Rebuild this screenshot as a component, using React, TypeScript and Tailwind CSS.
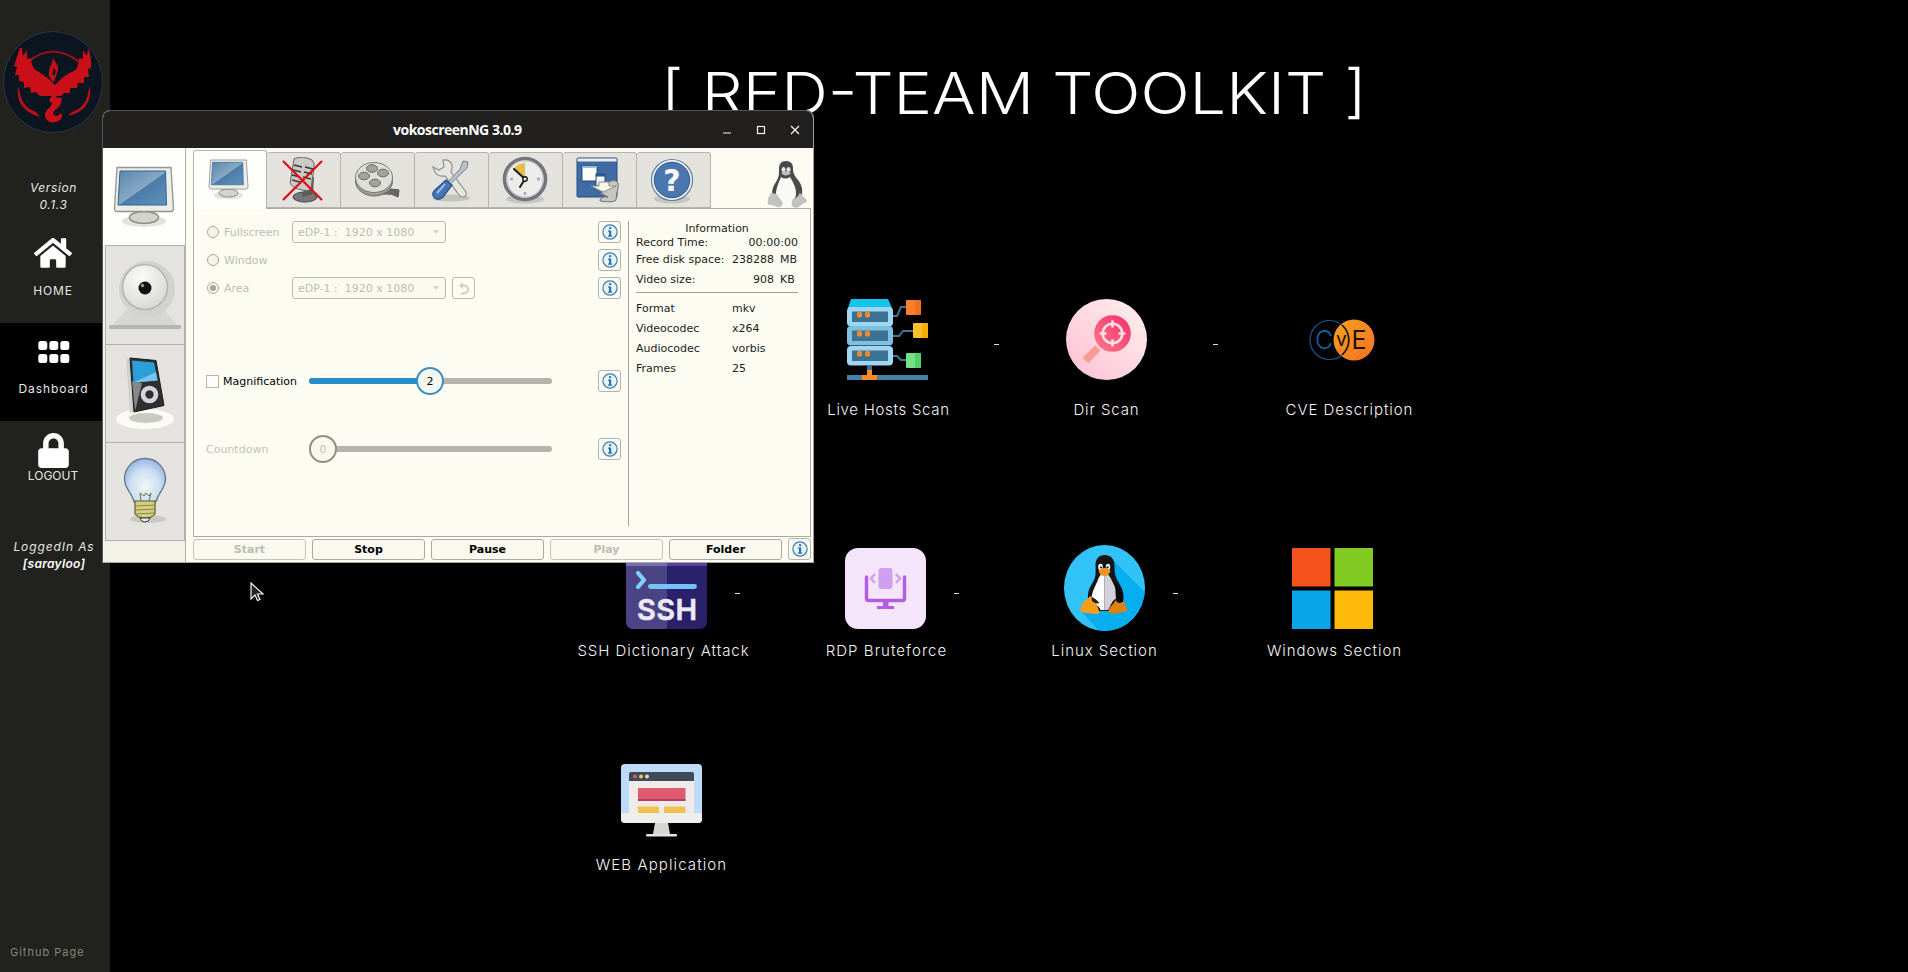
import type { ReactNode } from "react";
import { FaHome, FaLock } from "react-icons/fa";

/* ---------- launcher icons ---------- */

function ServerIcon() {
  return (
    <svg viewBox="0 0 81 81" className="h-[81px] w-[81px]">
      <path d="M4 0h37l4 9H1z" fill="#12c5ee" />
      {[8, 27, 47].map((y) => (
        <g key={y}>
          <rect x="0" y={y} width="46" height="19.5" rx="4" fill={y === 27 ? "#7fbfe2" : "#9fd6f3"} />
          <rect x="5" y={y + 4.5} width="36" height="10.5" fill="#3c7291" />
          <rect x="10" y={y + 5} width="5" height="5.5" rx="1.5" fill="#f58a2c" />
          <rect x="18" y={y + 5} width="5" height="5.5" rx="1.5" fill="#f58a2c" />
        </g>
      ))}
      <path d="M46 17h4l4-9h6M46 37h6l4-5h11M46 57h4l4 4h6" fill="none" stroke="#3f7594" strokeWidth="2" />
      <rect x="59" y="1" width="15" height="15" rx="1" fill="#fb7f2b" />
      <rect x="68" y="1" width="6" height="15" fill="#ef6f20" />
      <rect x="66" y="24" width="15" height="15" rx="1" fill="#fcc127" />
      <rect x="75" y="24" width="6" height="15" fill="#f7ab05" />
      <rect x="59" y="54" width="15" height="15" rx="1" fill="#73e287" />
      <rect x="68" y="54" width="6" height="15" fill="#52cf6c" />
      <rect x="20" y="66" width="5" height="6" fill="#3f7594" />
      <rect x="0" y="76" width="81" height="5" fill="#4682a2" />
      <path d="M20 71h5v5h5v5H15v-5h5z" fill="#f58a2c" />
    </svg>
  );
}

function DirScanIcon() {
  return (
    <svg viewBox="0 0 81 81" className="h-[81px] w-[81px]">
      <defs>
        <linearGradient id="dsBg" x1="0" y1="1" x2="1" y2="0">
          <stop offset="0" stopColor="#fcbfd3" />
          <stop offset="1" stopColor="#fff1ee" />
        </linearGradient>
        <linearGradient id="dsLens" x1="0" y1="1" x2="1" y2="0">
          <stop offset="0" stopColor="#fb7a85" />
          <stop offset="1" stopColor="#f72c6e" />
        </linearGradient>
      </defs>
      <circle cx="40.5" cy="40.5" r="40.5" fill="url(#dsBg)" />
      <path d="M29 46.500l5.500 5L22.500 64l-6-5z" fill="#fb9a90" />
      <circle cx="46.500" cy="34.500" r="18.300" fill="url(#dsLens)" />
      <circle cx="46.500" cy="34.500" r="9.800" fill="none" stroke="#ffdfe6" strokeWidth="2.600" />
      <path d="M46.500 21.500v7M46.500 40.500v7M33.500 34.500h7M52.500 34.500h7" stroke="#ffdfe6" strokeWidth="2.600" />
    </svg>
  );
}

function CveIcon() {
  return (
    <svg viewBox="0 0 66 42" className="h-[42px] w-[66px]">
      <defs>
        <linearGradient id="cveOrange" x1="0" y1="0" x2="1" y2="1">
          <stop offset="0" stopColor="#f9a21e" />
          <stop offset="1" stopColor="#f37021" />
        </linearGradient>
      </defs>
      <circle cx="45" cy="21" r="20.500" fill="url(#cveOrange)" />
      <circle cx="20.500" cy="21" r="19.500" fill="none" stroke="#15568a" strokeWidth="1.200" />
      <path d="M33.500 6.500a20 20 0 0 1 0 29" fill="none" stroke="#241608" strokeWidth="1.600" />
      <text x="6" y="30" fontSize="25" fill="#17609a" className="font-[Inter]" fontWeight="300">C</text>
      <text x="27" y="27" fontSize="19" fill="#1b1208" className="font-[Inter]" fontWeight="400">v</text>
      <text x="42.500" y="30" fontSize="25" fill="#1b1208" className="font-[Inter]" fontWeight="400">E</text>
    </svg>
  );
}

function SshIcon() {
  return (
    <svg viewBox="0 0 81 81" className="h-[81px] w-[81px]">
      <rect width="81" height="81" rx="7" fill="#29216a" />
      <path d="M7 0h34v81H7a7 7 0 0 1-7-7V7a7 7 0 0 1 7-7z" fill="#4b4484" />
      <path d="M0 18V7a7 7 0 0 1 7-7h34v18z" fill="#766cb8" />
      <path d="M41 0h33a7 7 0 0 1 7 7v11H41z" fill="#5b3fa6" />
      <path d="M12 25l6 7-6 7" fill="none" stroke="#7fd0fb" strokeWidth="4.200" strokeLinecap="round" strokeLinejoin="round" />
      <path d="M24.500 38.500h44" stroke="#74c3f8" strokeWidth="4.800" strokeLinecap="round" />
      <text x="11" y="71.500" fontSize="29" fontWeight="600" fill="#eceaf4" stroke="#eceaf4" strokeWidth="0.500" strokeLinejoin="round" textLength="60" lengthAdjust="spacing" className="font-[Inter]">SSH</text>
    </svg>
  );
}

function RdpIcon() {
  return (
    <svg viewBox="0 0 81 81" className="h-[81px] w-[81px]">
      <rect width="81" height="81" rx="13" fill="#f5e5fa" />
      <path d="M21.500 29v21.500a2 2 0 0 0 2 2h34a2 2 0 0 0 2-2V29" fill="none" stroke="#b45ce6" strokeWidth="3.400" strokeLinecap="round" />
      <path d="M38 53h5.500v5H49v3H32v-3h6z" fill="#b45ce6" />
      <rect x="33.500" y="20" width="14" height="21" rx="3" fill="#cfa0f0" />
      <path d="M30 26l-4 4.500 4 4.500M51 26l4 4.500-4 4.500" fill="none" stroke="#cfa0f0" strokeWidth="2.600" />
    </svg>
  );
}

function LinuxIcon() {
  return (
    <svg viewBox="0 0 81 86" className="-mt-[2px] h-[86px] w-[81px]">
      <defs>
        <clipPath id="lxClip">
          <ellipse cx="40.500" cy="43" rx="40.500" ry="43" />
        </clipPath>
      </defs>
      <g clipPath="url(#lxClip)">
        <rect width="81" height="86" fill="#31c3f8" />
        <path d="M49 15l32 32v39H35L18 67z" fill="#06aef0" />
      </g>
      <path d="M40.500 10c-5.500 0-9 4-9 10 0 7 1 11-2.500 17-4 6-5.500 10-5 17l5 12h22l8-9c2-8-1-14-4.500-20C51 31 50.500 28 50.500 20c0-6-4-10-10-10z" fill="#141517" />
      <path d="M40.500 27c-4 2-6 5-7 9-4 9-6 12-6 19 3 4 8 6 9 10h4z" fill="#fff" />
      <path d="M40.500 27c4 2 6 5 7.500 9 4 8 6 12 5 17-6 3-6 8-9 12h-3.500z" fill="#d3d0da" />
      <ellipse cx="36.500" cy="22" rx="2.300" ry="3.200" fill="#fff" />
      <ellipse cx="44" cy="22" rx="2.300" ry="3.200" fill="#e5e5e5" />
      <circle cx="37" cy="22.500" r="1.100" fill="#111" />
      <circle cx="43.500" cy="22.500" r="1.100" fill="#111" />
      <path d="M34.500 26c3-4 9-4 12 0-1 3-3 5-6 5s-5-2-6-5z" fill="#f59320" />
      <path d="M26 51l5 4 4.500 12c-1 3-4 2-8 1.500C22 67.500 17 68 16 65c1-3 2-3 2-6 1-3 6-4 8-8z" fill="#fb9c1c" />
      <path d="M54 52c1 5 5 6 7 5-1 4 2 5 2.500 8-2 2-6 2-9 3-4 1-8 1-10-1 0-5 4-6 9.500-15z" fill="#de810f" />
      <path d="M51 38c5 3 8 10 8 16 0 5-6 5-7 1z" fill="#08090b" />
      <path d="M28 52c2 1 5 3 7.500 6-3 1-6 0-8-3z" fill="#222" />
    </svg>
  );
}

function WindowsIcon() {
  return (
    <svg viewBox="0 0 81 81" className="h-[81px] w-[81px]">
      <rect width="38.500" height="38.500" fill="#f4511b" />
      <rect x="42.500" width="38.500" height="38.500" fill="#81cb22" />
      <rect y="42.500" width="38.500" height="38.500" fill="#09a6ea" />
      <rect x="42.500" y="42.500" width="38.500" height="38.500" fill="#fdb908" />
    </svg>
  );
}

function WebIcon() {
  return (
    <svg viewBox="0 0 81 73" className="h-[73px] w-[81px]">
      <rect width="81" height="59" rx="4" fill="#bddcfa" />
      <path d="M0 49h81v6a4 4 0 0 1-4 4H4a4 4 0 0 1-4-4z" fill="#eeeeea" />
      <path d="M8 11h65v38H8z" fill="#eeebea" />
      <path d="M10 8h61a2 2 0 0 1 2 2v7H8v-7a2 2 0 0 1 2-2z" fill="#3f4a56" />
      <circle cx="14" cy="12.500" r="2" fill="#d65b6c" />
      <circle cx="20" cy="12.500" r="2" fill="#efcb55" />
      <circle cx="26" cy="12.500" r="2" fill="#d8ddc9" />
      <rect x="17" y="24" width="47.500" height="13" fill="#e05b70" />
      <rect x="17" y="35" width="47.500" height="2" fill="#b83c64" />
      <path d="M17 42.500h21V49H17zM43 42.500h21.500V49H43z" fill="#f2c04f" />
      <path d="M34 59h13l2 11H32z" fill="#d6d6d2" />
      <rect x="25" y="70" width="31" height="2.600" rx="1" fill="#e4e4e0" />
    </svg>
  );
}

/* ---------- recorder icons ---------- */

function MonitorIcon({ className }: { className: string }) {
  return (
    <svg viewBox="0 0 62 62" className={className}>
      <defs>
        <linearGradient id="scr" x1="0" y1="0" x2="1" y2="1">
          <stop offset="0" stopColor="#5c86ac" />
          <stop offset="0.5" stopColor="#86a8c4" />
          <stop offset="0.52" stopColor="#4b7ca8" />
          <stop offset="1" stopColor="#5e93bb" />
        </linearGradient>
      </defs>
      <ellipse cx="31" cy="55" rx="22" ry="6" fill="#d9d9d0" opacity="0.7" />
      <ellipse cx="31" cy="51.500" rx="14.500" ry="6" fill="#d3d3ce" stroke="#8c8c86" strokeWidth="1.500" />
      <path d="M4 1.500h54l2.500 41q0 3-3 3h-53q-3 0-3-3z" fill="#ecece8" stroke="#94948e" strokeWidth="1.300" />
      <path d="M7 5h45.500l1 34H5z" fill="url(#scr)" stroke="#2f6591" strokeWidth="1" />
    </svg>
  );
}

function WebcamIcon() {
  return (
    <svg viewBox="0 0 74 74" className="h-[74px] w-[74px]">
      <defs>
        <radialGradient id="camBall" cx="0.400" cy="0.300" r="0.700">
          <stop offset="0" stopColor="#fbfbf8" />
          <stop offset="1" stopColor="#d9d9d5" />
        </radialGradient>
      </defs>
      <path d="M18 52h38l14 16H4z" fill="#d6d6d2" />
      <rect x="1" y="67" width="72" height="4" rx="1" fill="#b4b4b2" />
      <circle cx="39" cy="31" r="28" fill="#d2d2ce" />
      <circle cx="37" cy="29" r="22.500" fill="url(#camBall)" stroke="#b5b5b2" strokeWidth="1.600" />
      <circle cx="37" cy="30" r="6.500" fill="#111" />
      <circle cx="34.500" cy="27.500" r="1.700" fill="#999" />
    </svg>
  );
}

function PlayerIcon() {
  return (
    <svg viewBox="0 0 60 74" className="h-[74px] w-[60px]">
      <ellipse cx="30" cy="63" rx="29" ry="10" fill="#fcfcf4" />
      <ellipse cx="31" cy="62" rx="17" ry="5" fill="#cacac4" />
      <path d="M11 3l4-1 4 54-4 1z" fill="#d0d0cc" />
      <path d="M15 2l26 2.500 8 45L19 56z" fill="#2f2f31" stroke="#1b1b1b" strokeWidth="1" />
      <path d="M17 25l10 2-7 28z" fill="#87878a" />
      <path d="M17 4.500l22 2 3.500 18-24 2z" fill="#2b9fd8" />
      <path d="M41 16l1.500 8.500-24 2z" fill="#73c5ea" />
      <circle cx="34.500" cy="38.500" r="6.500" fill="none" stroke="#d6d6d8" strokeWidth="4.600" />
    </svg>
  );
}

function BulbIcon() {
  return (
    <svg viewBox="0 0 44 68" className="h-[68px] w-[44px]">
      <defs>
        <radialGradient id="bulb" cx="0.5" cy="0.600" r="0.600">
          <stop offset="0" stopColor="#f2f6f6" />
          <stop offset="0.600" stopColor="#cbdff2" />
          <stop offset="1" stopColor="#95b4e6" />
        </radialGradient>
      </defs>
      <ellipse cx="25" cy="62" rx="18" ry="4" fill="#c9c9c2" />
      <path d="M22 1.500C10 1.500 1.500 11 1.500 22c0 9 7 14 8.500 20 1 5 6 5 12 5s11 0 12-5c1.500-6 8.500-11 8.500-20C42.500 11 34 1.500 22 1.500z" fill="url(#bulb)" stroke="#6c7480" strokeWidth="1.300" />
      <path d="M18 44l-1-8 4 3 2-3 3 3 2-3-2 8" fill="none" stroke="#6b7248" strokeWidth="1" />
      <path d="M12 44h20v13q-3 4-10 4t-10-4z" fill="#d4cf80" stroke="#5d5b2c" strokeWidth="1.200" />
      <path d="M12 49l20-1M12 53l20-1M12 57l20-1" stroke="#8a8548" strokeWidth="1" />
      <path d="M17 61h10q-1 4-5 4t-5-4z" fill="#eee" stroke="#333" strokeWidth="1" />
    </svg>
  );
}

function MicIcon() {
  return (
    <svg viewBox="0 0 46 46" className="h-[46px] w-[46px]">
      <ellipse cx="25" cy="40" rx="12" ry="5" fill="#777" stroke="#444" />
      <path d="M27 20h7l-1 17-11 3z" fill="#5d5b58" />
      <path d="M14 2q8-4 18 1 3 2 2 8l-3 20q-1 4-9 2-10-2-12-7z" fill="#c9c9c5" stroke="#666" strokeWidth="1" />
      <path d="M14 8l8 2M25 10l8 2M13 13l8 2M24 15l8 2M12 18l8 2M23 20l8 2M12 23l8 2" stroke="#3a3a38" strokeWidth="1.800" />
      <path d="M3 4l39 39M42 4L3 43" stroke="#dd0d12" strokeWidth="2.200" />
    </svg>
  );
}

function ReelIcon() {
  return (
    <svg viewBox="0 0 46 38" className="h-[38px] w-[46px]">
      <path d="M20 34q12 0 17-6l8 1-1 7q-6-4-14-3z" fill="#686864" stroke="#555" />
      <ellipse cx="20" cy="20" rx="18.500" ry="15" fill="#9b9b96" stroke="#6d6d69" />
      <ellipse cx="20" cy="16.500" rx="18.500" ry="15" fill="#dededa" stroke="#7c7c77" />
      {[[18, 7.500], [29, 12], [10, 15], [21, 22]].map(([x, y]) => (
        <ellipse key={x} cx={x} cy={y} rx="5.500" ry="3.800" fill="#a3a39e" stroke="#6a6a66" />
      ))}
    </svg>
  );
}

function ToolsIcon() {
  return (
    <svg viewBox="0 0 40 44" className="h-[44px] w-[40px]">
      <ellipse cx="20" cy="40" rx="19" ry="3.500" fill="#c3c3be" />
      <path d="M12 2q7-1 9 5 1 3-1 7l15 20q1 5-3 5-3 0-4-2L14 18q-7 1-10-4l-2-5 6 3 5-3z" fill="#e5e5e1" stroke="#8f8f8a" strokeWidth="1.200" />
      <path d="M32 3l5 1-1 6-4 4-14 13-2-2L29 11z" fill="#b9c1ce" stroke="#7d8490" strokeWidth="1" />
      <path d="M15 22l6 5-9 12q-4 4-8 1-4-3-1-7z" fill="#4675b4" stroke="#234c88" strokeWidth="1.200" />
      <path d="M14 26L6 35" stroke="#9dbbe2" strokeWidth="2" />
    </svg>
  );
}

function ClockIcon() {
  return (
    <svg viewBox="0 0 46 48" className="h-[48px] w-[46px]">
      <ellipse cx="23" cy="43" rx="19" ry="4.500" fill="#c6c6c0" />
      <circle cx="23" cy="23" r="20.500" fill="#ececea" stroke="#74747e" strokeWidth="3.600" />
      <circle cx="23" cy="23" r="18.200" fill="none" stroke="#b9b9bf" strokeWidth="1" />
      <path d="M23 23V7q-7 0-12 6z" fill="#e7bd4a" />
      <path d="M23 23L12 13M23 23l-5 8" stroke="#1a1a1a" strokeWidth="2" strokeLinecap="round" />
      <circle cx="23" cy="23" r="2.200" fill="#fff" stroke="#111" strokeWidth="1.400" />
      <path d="M8 23h3M35 23h3M23 36v3" stroke="#a9a9a9" strokeWidth="2.500" />
    </svg>
  );
}

function WindowsCopyIcon() {
  return (
    <svg viewBox="0 0 44 46" className="mr-[2px] h-[46px] w-[44px]">
      <rect x="1" y="1" width="40" height="39" rx="1" fill="#3e6ba3" stroke="#274c7d" />
      <rect x="1.500" y="1.500" width="39" height="3" fill="#eceded" />
      <rect x="6" y="9" width="15" height="15" fill="#fcfcf8" stroke="#274c7d" />
      <rect x="6" y="9" width="15" height="2" fill="#9db7d8" />
      <rect x="20" y="17" width="9" height="12" fill="#f2f4f8" stroke="#274c7d" />
      <rect x="20" y="17" width="9" height="2.500" fill="#2e558c" />
      <path d="M24 36q7-1 7-10 8-5 11 0 1 5-1 9l-1 8q-2 3-16 1 0-5 8-4z" fill="#c5c5c1" stroke="#72726e" />
      <path d="M15 29h8v-4h10v4h7L27 35z" fill="#f5f5e8" stroke="#8c8c88" />
    </svg>
  );
}

function HelpIcon() {
  return (
    <svg viewBox="0 0 46 48" className="mr-[2px] h-[48px] w-[46px]">
      <ellipse cx="23" cy="43" rx="18" ry="4.500" fill="#c6c6c0" />
      <circle cx="23" cy="24" r="20.500" fill="#f8f8f6" stroke="#5f7da6" strokeWidth="1.200" />
      <circle cx="23" cy="24" r="17.800" fill="#4a78ae" stroke="#2a5890" strokeWidth="1" />
      <text x="23" y="35" textAnchor="middle" fontSize="30" fontWeight="700" fill="#fafaf6" className="font-[DejaVu_Sans]">?</text>
    </svg>
  );
}

function TuxIcon() {
  return (
    <svg viewBox="0 0 40 48" className="h-[48px] w-[40px]">
      <path d="M19 1c-5 0-7 3-7 8 0 6 0 8-3 13-3 4-4 8-4 12l3 8h22l5-8c1-6-1-10-4-14-4-5-5-7-5-12 0-5-3-7-7-7z" fill="#4a4a4a" />
      <path d="M14 17c3 2 6 2 9 0 3 5 6 10 6 16s-4 12-10 12-10-5-10-11c0-6 3-12 5-17z" fill="#fafaf5" />
      <ellipse cx="16.500" cy="9.500" rx="2" ry="2.600" fill="#e8e8e4" />
      <ellipse cx="21.500" cy="9.500" rx="2" ry="2.600" fill="#e8e8e4" />
      <path d="M14 13q5-4 10 0-5 5-10 0z" fill="#bdbdb9" />
      <path d="M5 33l4 1 6 8q1 4-3 5-5-2-11-3 0-4 1-7z" fill="#c2c2be" stroke="#aaa" strokeWidth="0.500" />
      <path d="M26 39q4 0 7-6l3 4q3 2 4 4-5 3-9 6-6 1-6-3z" fill="#c2c2be" stroke="#aaa" strokeWidth="0.500" />
    </svg>
  );
}

function PhoenixLogo() {
  return (
    <svg viewBox="0 0 100 102" className="h-[102px] w-[100px]">
      <ellipse cx="50" cy="51" rx="49.500" ry="50.500" fill="#0b1520" stroke="#2e3446" strokeWidth="1" />
      <path d="M25 31q25-21 51 0" fill="none" stroke="#9c1018" strokeWidth="2" />
      <path d="M15 55q-3 24 22 31l-4-5Q19 76 17 62z" fill="#b81018" />
      <path d="M87 55q3 24-22 30l4-4q14-5 16-19z" fill="#b81018" />
      <path d="M50 26c1 5 6 7 5 13-1 4-3 8-4 12-3-2-6-5-5-11 0-4 4-8 4-14z" fill="#c41018" />
      <path d="M51 37q3 3 0 8-3-3 0-8z" fill="#0b1520" />
      <path d="M17 17l1 8 4-6v9l4-1q0 9 6 13 8 4 13 9l5 5 5-5q6-6 14-9 5-4 5-13l4 1v-9l4 6 1-8q4 10 3 20l-3 1 1 8-5 0 0 6-6 0-1 5-7 0 0 5-6 0-3 3H35l-4-4-5 1-1-6-6 1 0-6-5-1 0-6-4 0 2-8-3-1Q12 25 15 17z" transform="translate(2 0)" fill="#c90f18" />
      <path d="M50 63l5 4h4q-1 9-7 12-4 4 1 6 5-1 4-4 4 4 0 8-8 5-13 0-4-5 0-10 5-4 5-7-2 0-3-3z" fill="#c90f18" />
    </svg>
  );
}

/* ---------- recorder window ---------- */

function InfoButton() {
  return (
    <button className="flex h-[22px] w-[23px] shrink-0 items-center justify-center rounded-[3px] border border-[#b4b4ac] bg-[#fbfbf2]">
      <svg viewBox="0 0 16 16" className="h-4 w-4">
        <circle cx="8" cy="8" r="7.100" fill="#e9f4f8" stroke="#3b7fb2" strokeWidth="1.200" />
        <rect x="7" y="3.200" width="2.200" height="2" fill="#2b72aa" />
        <path d="M6 6.500h3.200v5h1v1.200H6v-1.200h1V7.700H6z" fill="#2b72aa" />
      </svg>
    </button>
  );
}

function Radio({ label, checked }: { label: string; checked?: boolean }) {
  return (
    <>
      <span className="flex h-3 w-3 items-center justify-center rounded-full border border-[#a8a89e] bg-[#f3f3e8]">
        {checked && <span className="h-1.5 w-1.5 rounded-full bg-[#a4a49c]" />}
      </span>
      <span className="w-[68px] pl-[5px] text-[#bcbcb2]">{label}</span>
    </>
  );
}

function Combo() {
  return (
    <span className="ml-[5px] flex h-[22px] w-[154px] items-center justify-between rounded-[3px] border border-[#b9b9b0] bg-[#fafaf0] pr-[6px] pl-[5px] whitespace-pre text-[#bebeb4]">
      eDP-1 :&nbsp; 1920 x 1080
      <svg viewBox="0 0 6 4" className="h-[4px] w-[6px]">
        <path d="M0 0h6L3 4z" fill="#d2d2c8" />
      </svg>
    </span>
  );
}

function Tab({ children }: { children: ReactNode }) {
  return (
    <div className="flex h-[56px] w-[74px] items-center justify-center rounded-t-[3px] border border-l-0 border-[#b4b4b2] bg-[#e3e2dd] pr-[2px]">
      {children}
    </div>
  );
}

function SideTab({ children }: { children: ReactNode }) {
  return (
    <div className="ml-[2px] flex h-[98.5px] items-center justify-center border border-b-0 border-[#b0b0ae] bg-[#e5e3df] last:border-b">
      {children}
    </div>
  );
}

function ActionButton({ label, disabled }: { label: string; disabled?: boolean }) {
  return (
    <button
      disabled={disabled}
      className="h-[21px] w-[113px] rounded-[3px] border border-[#aaaaa2] bg-[#f9f9ef] text-[11px] font-bold text-black disabled:border-[#c4c4bc] disabled:text-[#bdbdb4]"
    >
      {label}
    </button>
  );
}

function InfoRow({ label, value, unit }: { label: string; value: string; unit: string }) {
  return (
    <div className="flex h-5 items-center">
      <span className="w-[76px] whitespace-nowrap">{label}</span>
      <span className="w-[62px] text-right">{value}</span>
      <span className="pl-[6px]">{unit}</span>
    </div>
  );
}

function RecorderWindow() {
  const formats = [
    ["Format", "mkv"],
    ["Videocodec", "x264"],
    ["Audiocodec", "vorbis"],
    ["Frames", "25"],
  ];
  return (
    <section className="absolute top-[110px] left-[102px] flex h-[453px] w-[712px] flex-col overflow-hidden rounded-t-[8px] border border-[#54545a] border-r-[#a0a098] border-b-[#a9a9a4] bg-[#fcfcf3] font-['DejaVu_Sans',sans-serif] text-[11px] leading-none text-[#1d1d1a]">
      <header className="flex h-[37px] shrink-0 items-center bg-[#21201e] text-white">
        <h2 className="ml-[290px] w-[128px] font-['Open_Sans',sans-serif] text-[14px] font-bold tracking-[-0.5px] whitespace-nowrap">
          vokoscreenNG 3.0.9
        </h2>
        <svg viewBox="0 0 78 10" className="mr-[13px] ml-auto h-[10px] w-[78px]">
          <path d="M1 8h8" stroke="#f0f0f0" strokeWidth="1.200" />
          <rect x="35.500" y="1.500" width="7" height="7" fill="none" stroke="#f0f0f0" strokeWidth="1.200" />
          <path d="M69 1l8 8M77 1l-8 8" stroke="#f0f0f0" strokeWidth="1.300" />
        </svg>
      </header>

      <div className="flex min-h-0 flex-1">
        <nav className="flex w-[83px] flex-col border-r border-[#b0b0ae] bg-[#f3f2e9]">
          <div className="flex h-[97px] items-center justify-center bg-[#fefefa]">
            <MonitorIcon className="h-[62px] w-[62px]" />
          </div>
          <SideTab><WebcamIcon /></SideTab>
          <SideTab><PlayerIcon /></SideTab>
          <SideTab><BulbIcon /></SideTab>
        </nav>

        <div className="flex flex-1 flex-col pl-[7px]">
          <div className="flex h-[60px] items-end pr-[6px]">
            <div className="z-10 -mb-px flex h-[59px] w-[74px] items-start justify-center rounded-t-[3px] border border-b-0 border-[#b4b4b0] bg-[#fefefa] pt-[8px] pr-1">
              <MonitorIcon className="h-[41px] w-[41px]" />
            </div>
            <Tab><MicIcon /></Tab>
            <Tab><ReelIcon /></Tab>
            <Tab><ToolsIcon /></Tab>
            <Tab><ClockIcon /></Tab>
            <Tab><WindowsCopyIcon /></Tab>
            <Tab><HelpIcon /></Tab>
            <div className="ml-auto"><TuxIcon /></div>
          </div>

          <div className="mr-[2px] flex h-[329px] border border-[#aaaaa4]">
            <div className="flex w-[434px] shrink-0 flex-col pt-[9px] pr-[7px]">
              <div className="flex h-7 items-center pl-[13px]">
                <Radio label="Fullscreen" />
                <Combo />
                <span className="flex-1" />
                <InfoButton />
              </div>
              <div className="flex h-7 items-center pl-[13px]">
                <Radio label="Window" />
                <span className="flex-1" />
                <InfoButton />
              </div>
              <div className="flex h-7 items-center pl-[13px]">
                <Radio label="Area" checked />
                <Combo />
                <span className="ml-[6px] flex h-[22px] w-[23px] items-center justify-center rounded-[3px] border border-[#b9b9b0]">
                  <svg viewBox="0 0 12 14" className="h-[14px] w-[12px]">
                    <path d="M5 1L1 4.500 5 8V5.500q5 0 4 4-1 2-6 2v2q8 0 8-5 0-5-6-5z" fill="#cfcfc8" />
                  </svg>
                </span>
                <span className="flex-1" />
                <InfoButton />
              </div>

              <div className="mt-[65px] flex h-7 items-center pl-3">
                <span className="h-[13px] w-[13px] border border-[#b4b4b4] bg-[#fefefa]" />
                <span className="w-[90px] pl-1 text-black">Magnification</span>
                <span className="relative flex h-1.5 w-[243px] rounded-full bg-[#b5b4ac]">
                  <span className="h-1.5 w-[121px] rounded-full bg-[#258dc9]" />
                  <span className="absolute -top-[11px] left-[107px] flex h-7 w-7 items-center justify-center rounded-full border-2 border-[#3e8fc0] bg-[#f4f8f0] text-black">
                    2
                  </span>
                </span>
                <span className="flex-1" />
                <InfoButton />
              </div>

              <div className="mt-[40px] flex h-7 items-center pl-3">
                <span className="w-[103px] text-[#c3c3b9]">Countdown</span>
                <span className="relative flex h-1.5 w-[243px] rounded-full bg-[#b5b4ac]">
                  <span className="absolute -top-[11px] left-0 flex h-7 w-7 items-center justify-center rounded-full border-2 border-[#8f8f86] bg-[#f8f8ec] text-[#c0c0b6]">
                    0
                  </span>
                </span>
                <span className="flex-1" />
                <InfoButton />
              </div>
            </div>

            <aside className="mt-[12px] h-[305px] w-[170px] border-l border-[#a2a29c] pl-[7px]">
              <p className="pt-[2px] text-center">Information</p>
              <div className="mt-[3px] flex justify-between">
                <span>Record Time:</span>
                <span>00:00:00</span>
              </div>
              <div className="mt-[1px]">
                <InfoRow label="Free disk space:" value="238288" unit="MB" />
                <InfoRow label="Video size:" value="908" unit="KB" />
              </div>
              <hr className="mt-[3px] border-[#9c9c94]" />
              <dl className="mt-[5px] grid grid-cols-[96px_1fr]">
                {formats.map(([k, v]) => (
                  <div key={k} className="contents">
                    <dt className="flex h-5 items-center">{k}</dt>
                    <dd className="flex h-5 items-center">{v}</dd>
                  </div>
                ))}
              </dl>
            </aside>
          </div>

          <footer className="mt-px flex items-center gap-[6px]">
            <ActionButton label="Start" disabled />
            <ActionButton label="Stop" />
            <ActionButton label="Pause" />
            <ActionButton label="Play" disabled />
            <ActionButton label="Folder" />
            <InfoButton />
          </footer>
        </div>
      </div>
    </section>
  );
}

/* ---------- page ---------- */

function Tool({ className, label, labelClass, children }: { className: string; label: string; labelClass: string; children: ReactNode }) {
  return (
    <div className={`flex flex-col items-center ${className}`}>
      <div className="flex h-[87px] items-center">{children}</div>
      <span className={`text-[15px] leading-5 font-light whitespace-nowrap text-[#f4f4f4] ${labelClass}`}>{label}</span>
    </div>
  );
}

function Dash() {
  return (
    <span className="mt-[46px] flex h-[4px] w-[10px] items-center justify-center pr-[2px]">
      <span className="h-px w-[5px] bg-[#e0e0e0]" />
    </span>
  );
}

export default function App() {
  return (
    <div className="relative flex h-[972px] w-[1908px] overflow-hidden bg-black font-['Inter',sans-serif] text-white">
      <aside className="flex w-[110px] shrink-0 flex-col bg-[#21211d] text-[12px] leading-[17px] text-[#e6e6e2]">
        <div className="mt-[31px] ml-[3px]"><PhoenixLogo /></div>
        <p className="mt-[46px] w-[107px] text-center tracking-[0.6px] italic">
          Version
          <br />
          0.1.3
        </p>
        <a className="mt-[23px] flex w-[106px] flex-col items-center">
          <FaHome className="h-[34px] w-[38px] text-white" />
          <span className="mt-[12px] tracking-[0.8px]">HOME</span>
        </a>
        <a className="mt-[24px] flex h-[98px] flex-col items-center bg-black pr-[3px]">
          <svg viewBox="0 0 32 22" className="mt-[18px] h-[22px] w-[32px]">
            {[0, 11, 22].map((x) => (
              <g key={x} fill="#fff">
                <rect x={x + 0.300} y="0" width="9" height="9" rx="2.500" />
                <rect x={x + 0.300} y="13" width="9" height="9" rx="2.500" />
              </g>
            ))}
          </svg>
          <span className="mt-[17px] tracking-[0.9px]">Dashboard</span>
        </a>
        <a className="mt-[12px] flex w-[106px] flex-col items-center">
          <FaLock className="h-[35px] w-[31px] text-white" />
          <span className="-mt-px">LOGOUT</span>
        </a>
        <p className="mt-[54px] w-[108px] text-center tracking-[0.9px] italic">
          LoggedIn As
          <br />
          <b className="font-semibold tracking-[0.3px] text-white">[sarayloo]</b>
        </p>
        <a className="mt-auto mb-[11px] pl-[10px] text-[11px] tracking-[1px] text-[#85857c]">Github Page</a>
      </aside>

      <main className="flex-1">
        <h1 className="mt-[58px] ml-[551px] h-[70px] w-[640px] origin-left scale-x-[1.116] text-[58px] leading-[70px] font-light whitespace-nowrap">
          [ RED-TEAM TOOLKIT ]
        </h1>

        <div className="mt-[168px] ml-[673px] flex">
          <Tool className="w-[209px]" label="Live Hosts Scan" labelClass="mt-[17px] ml-[2px] tracking-[0.7px]"><ServerIcon /></Tool>
          <Dash />
          <Tool className="w-[209px]" label="Dir Scan" labelClass="mt-[17px] tracking-[0.9px]"><DirScanIcon /></Tool>
          <Dash />
          <Tool className="w-[242px]" label="CVE Description" labelClass="mt-[17px] ml-[15px] tracking-[0.95px]"><CveIcon /></Tool>
        </div>

        <div className="mt-[125px] ml-[490px] flex">
          <Tool className="w-[133px]" label="SSH Dictionary Attack" labelClass="mt-[9px] -ml-[6px] tracking-[0.95px]"><SshIcon /></Tool>
          <Dash />
          <Tool className="ml-[76px] w-[133px]" label="RDP Bruteforce" labelClass="mt-[9px] ml-[2px] tracking-[1.05px]"><RdpIcon /></Tool>
          <Dash />
          <Tool className="ml-[76px] w-[133px]" label="Linux Section" labelClass="mt-[9px] tracking-[0.95px]"><LinuxIcon /></Tool>
          <Dash />
          <Tool className="ml-[85px] w-[133px]" label="Windows Section" labelClass="mt-[9px] ml-[4px] tracking-[0.95px]"><WindowsIcon /></Tool>
        </div>

        <div className="mt-[96px] ml-[485px] flex">
          <Tool className="w-[133px]" label="WEB Application" labelClass="mt-[11px] tracking-[1.1px]"><WebIcon /></Tool>
        </div>
      </main>

      <RecorderWindow />

      <svg viewBox="0 0 14 20" className="absolute top-[582px] left-[250px] h-[20px] w-[14px]">
        <path d="M1 1v16l4-4 2.500 5.500 2.500-1-2.500-5.500H13z" fill="#26262a" stroke="#f2f2f2" strokeWidth="1.200" />
      </svg>
    </div>
  );
}
